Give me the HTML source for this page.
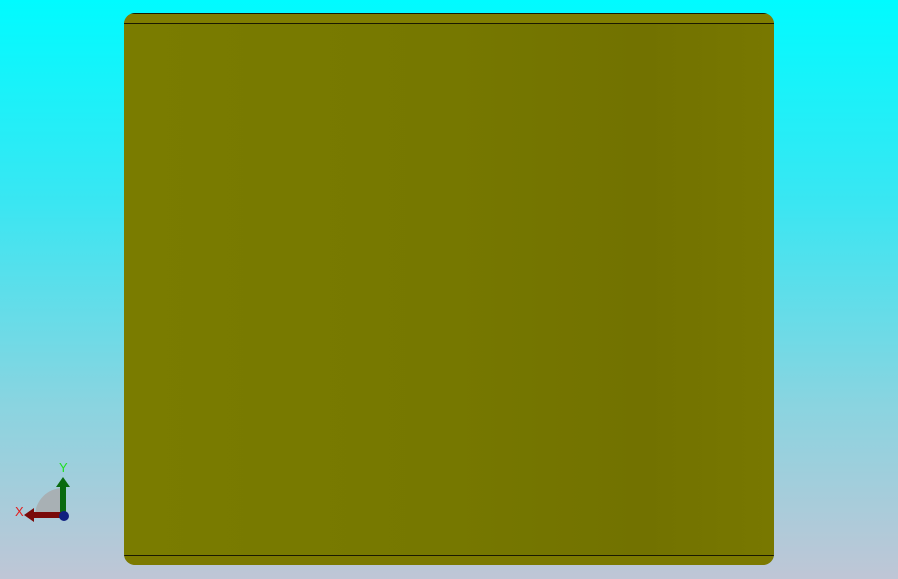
<!DOCTYPE html>
<html><head><style>
html,body{margin:0;padding:0;width:898px;height:579px;overflow:hidden}
body{background:linear-gradient(#00fbff 0%,#3ae6f2 35%,#8ad4e0 70%,#bfc6d6 100%);position:relative;font-family:"Liberation Sans",sans-serif}
.box{position:absolute;left:124px;top:13px;width:650px;height:552px;border-radius:11px;background:linear-gradient(90deg,#7a7c00 0%,#767800 50%,#727200 80%,#787800 100%);overflow:hidden}
.l{position:absolute;left:0;right:0;height:1px;background:#1a1a00}
</style></head><body>
<div class="box">
<div class="l" style="top:0"></div>
<div style="position:absolute;left:0;right:0;top:1px;height:9px;background:#807e00"></div>
<div class="l" style="top:10px"></div>
<div class="l" style="top:542px"></div>
<div style="position:absolute;left:0;right:0;top:543px;height:9px;background:#7c7a00"></div>
</div>
<svg style="position:absolute;left:0;top:0" width="898" height="579">
<path d="M63 516 L63 488 A28 28 0 0 0 35 516 Z" fill="#a8b0b4"/>
<rect x="60" y="484" width="6" height="32" fill="#0a6a10"/>
<polygon points="56,487 63,477 70,487" fill="#0a6a10"/>
<rect x="32" y="512" width="31" height="6" fill="#7a0a0a"/>
<polygon points="34,508 24,515 34,522" fill="#7a0a0a"/>
<circle cx="64" cy="516" r="5" fill="#102080"/>
<text x="59" y="472" font-size="13" fill="#20e020" font-family="Liberation Sans">Y</text>
<text x="15" y="516" font-size="13" fill="#e02020" font-family="Liberation Sans">X</text>
</svg>
</body></html>
